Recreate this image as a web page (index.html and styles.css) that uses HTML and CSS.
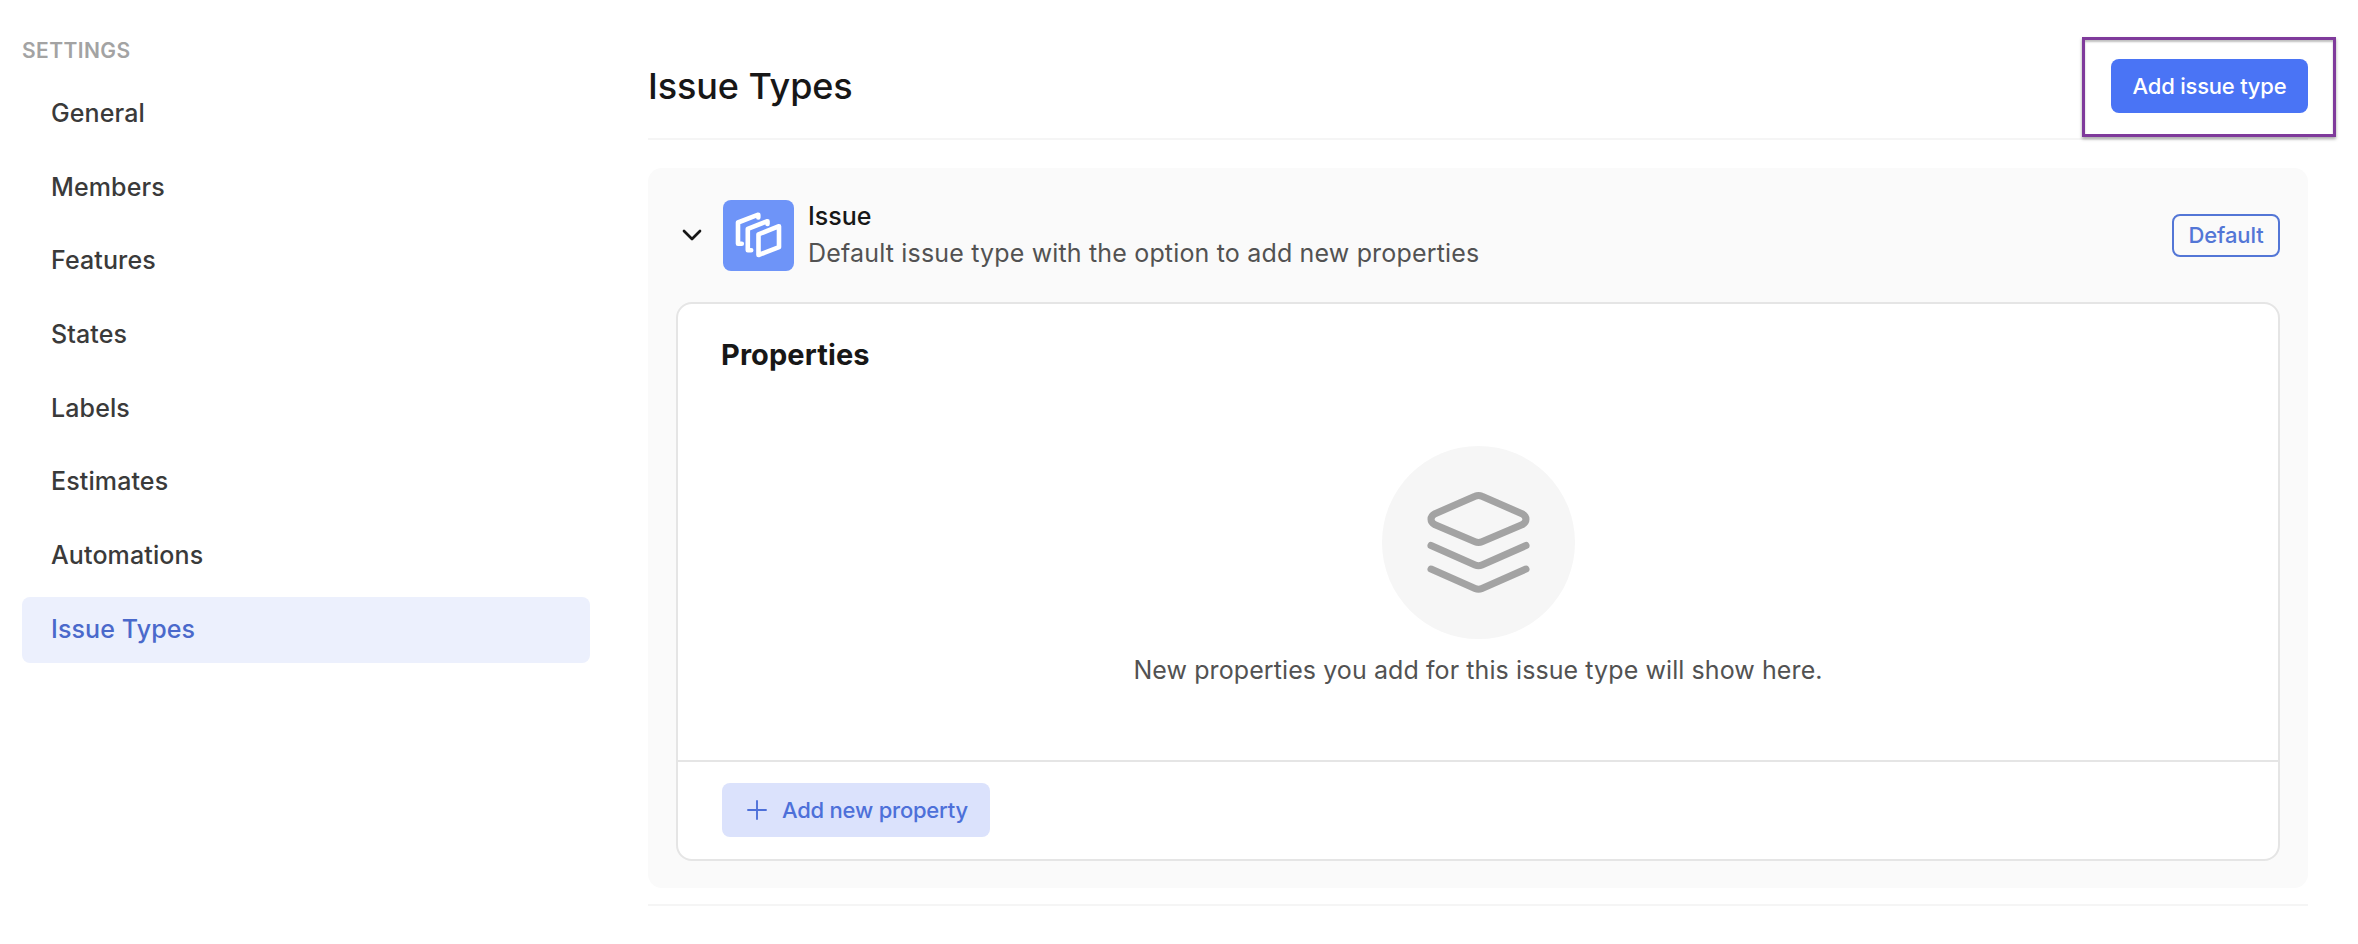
FILE: index.html
```
<!DOCTYPE html>
<html lang="en">
<head>
<meta charset="utf-8">
<title>Issue Types</title>
<link rel="stylesheet" href="styles.css">
</head>
<body>
<div class="page">
  <aside class="sidebar">
    <div class="sidebar-title">SETTINGS</div>
    <nav class="nav">
      <a class="nav-item">General</a>
      <a class="nav-item">Members</a>
      <a class="nav-item">Features</a>
      <a class="nav-item">States</a>
      <a class="nav-item">Labels</a>
      <a class="nav-item">Estimates</a>
      <a class="nav-item">Automations</a>
      <a class="nav-item active">Issue Types</a>
    </nav>
  </aside>
  <main class="main">
    <header class="header">
      <h1 class="title">Issue Types</h1>
      <div class="action">
        <button class="btn primary">Add issue type</button>
        <div class="highlight"></div>
      </div>
    </header>
    <section class="panel">
      <div class="type-row">
        <svg class="chevron" viewBox="0 0 20 12"><path d="M2 2l8 8 8-8"/></svg>
        <div class="type-icon">
          <svg viewBox="0 0 71 71"><path d="M56 26.2L35.5 34.3V55L56 47.2Z"/><path d="M44.5 24V21.2L24.8 28.8V50.3H28.2"/><path d="M35.3 17.5V14.7L15 22.5V43.7H18.8"/></svg>
        </div>
        <div class="type-text">
          <div class="type-name">Issue</div>
          <div class="type-desc">Default issue type with the option to add new properties</div>
        </div>
        <span class="badge">Default</span>
      </div>
      <div class="card">
        <div class="card-body">
          <h2 class="card-title">Properties</h2>
          <div class="empty">
            <div class="circle">
              <svg viewBox="0 0 100 100"><path d="M46.6 4.2Q50 2.6 53.4 4.2L93 21.5Q97 23.6 97 27Q97 30.4 93 32.5L53.4 49.2Q50 50.8 46.6 49.2L7 32.5Q3 30.4 3 27Q3 23.6 7 21.5Z"/><path d="M3 53L46.6 72.3Q50 73.8 53.4 72.3L97 53"/><path d="M3 76.3L46.6 95.6Q50 97.1 53.4 95.6L97 76.3"/></svg>
            </div>
            <p class="empty-text">New properties you add for this issue type will show here.</p>
          </div>
        </div>
        <div class="card-foot">
          <button class="btn soft"><svg class="plus" viewBox="0 0 20 20"><path d="M1 10H19M10 1V19"/></svg><span>Add new property</span></button>
        </div>
      </div>
    </section>
    <hr class="rule">
  </main>
</div>
</body>
</html>
```
FILE: styles.css
```
* { box-sizing: border-box; }
body { margin: 0; background: #fff; color: #171717; font-family: Inter, "Liberation Sans", sans-serif; }
h1, h2, p { margin: 0; }
.page { display: flex; width: 2358px; height: 944px; overflow: hidden; }
.sidebar { width: 590px; padding: 36px 0 0 22px; }
.sidebar-title { height: 30px; line-height: 30px; font-size: 21px; font-weight: 600; color: #a3a3a3; letter-spacing: 0.4px; }
.nav { display: flex; flex-direction: column; gap: 7.7px; padding-top: 15px; }
.nav-item { height: 66px; padding-left: 29px; line-height: 65px; border-radius: 8px; font-size: 25px; font-weight: 500; color: #3a3a3a; letter-spacing: 0.12px; }
.nav-item.active { background: #ecf0fd; color: #4a69cb; }
.main { width: 1660px; margin-left: 58px; }
.header { display: flex; align-items: center; justify-content: space-between; height: 140px; padding-top: 34px; border-bottom: 2px solid #f5f5f5; }
.title { font-size: 36px; line-height: 44px; font-weight: 500; letter-spacing: -0.1px; }
.action { position: relative; }
.highlight { position: absolute; left: -29px; top: -22px; width: 254px; height: 100px; border: 3px solid #7f3a9b; box-shadow: 0 2px 3px rgba(0,0,0,.35), inset 0 2px 2px rgba(0,0,0,.25); }
.btn { display: flex; align-items: center; height: 54px; border: 0; border-radius: 8px; font: 500 22px/54px Inter, "Liberation Sans", sans-serif; letter-spacing: -0.22px; }
.primary { width: 197px; justify-content: center; padding: 0; background: #4a74f5; color: #fff; }
.panel { height: 720px; margin-top: 28px; padding: 32px 28px 0; border-radius: 14px; background: #fafafa; }
.type-row { display: flex; align-items: center; height: 71px; }
.chevron { width: 20px; height: 12px; margin: 0 0 2px 6px; fill: none; stroke: #171717; stroke-width: 2.7; stroke-linecap: round; stroke-linejoin: round; }
.type-icon { width: 71px; height: 71px; margin-left: 21px; border-radius: 8px; background: #6e94f8; }
.type-icon svg { display: block; fill: none; stroke: #fff; stroke-width: 4.6; stroke-linejoin: round; stroke-linecap: round; }
.type-text { flex: 1; padding: 0 0 2px 14px; }
.type-name { font-size: 25px; line-height: 37px; font-weight: 500; }
.type-desc { font-size: 25px; line-height: 37px; color: #525252; letter-spacing: 0.17px; }
.badge { width: 108px; height: 43px; border: 2px solid #5376d6; border-radius: 8px; text-align: center; font-size: 22px; line-height: 39px; color: #5376d6; font-weight: 500; letter-spacing: -0.1px; }
.card { height: 559px; margin-top: 31px; border: 2px solid #e5e5e5; border-radius: 16px; background: #fff; }
.card-body { height: 458px; padding: 33px 0 0 43px; border-bottom: 2px solid #e5e5e5; }
.card-title { font-size: 29px; line-height: 36px; font-weight: 700; letter-spacing: 0.1px; }
.empty { display: flex; flex-direction: column; align-items: center; margin: 73px 43px 0 0; }
.circle { display: flex; align-items: center; justify-content: center; width: 193px; height: 193px; border-radius: 50%; background: #f6f6f6; }
.circle svg { width: 101px; height: 101px; fill: none; stroke: #a3a3a3; stroke-width: 7; stroke-linecap: round; stroke-linejoin: round; overflow: visible; }
.empty-text { margin-top: 13px; font-size: 25px; line-height: 37px; color: #525252; letter-spacing: 0.09px; }
.card-foot { padding: 21px 0 0 44px; }
.soft { width: 268px; padding: 0 0 0 25px; gap: 15px; background: #dbe2fc; color: #4d70d9; }
.plus { width: 20px; height: 20px; fill: none; stroke: #4d70d9; stroke-width: 1.9; stroke-linecap: round; }
.rule { height: 2px; margin: 16px 0 0; border: 0; background: #f5f5f5; }
```
